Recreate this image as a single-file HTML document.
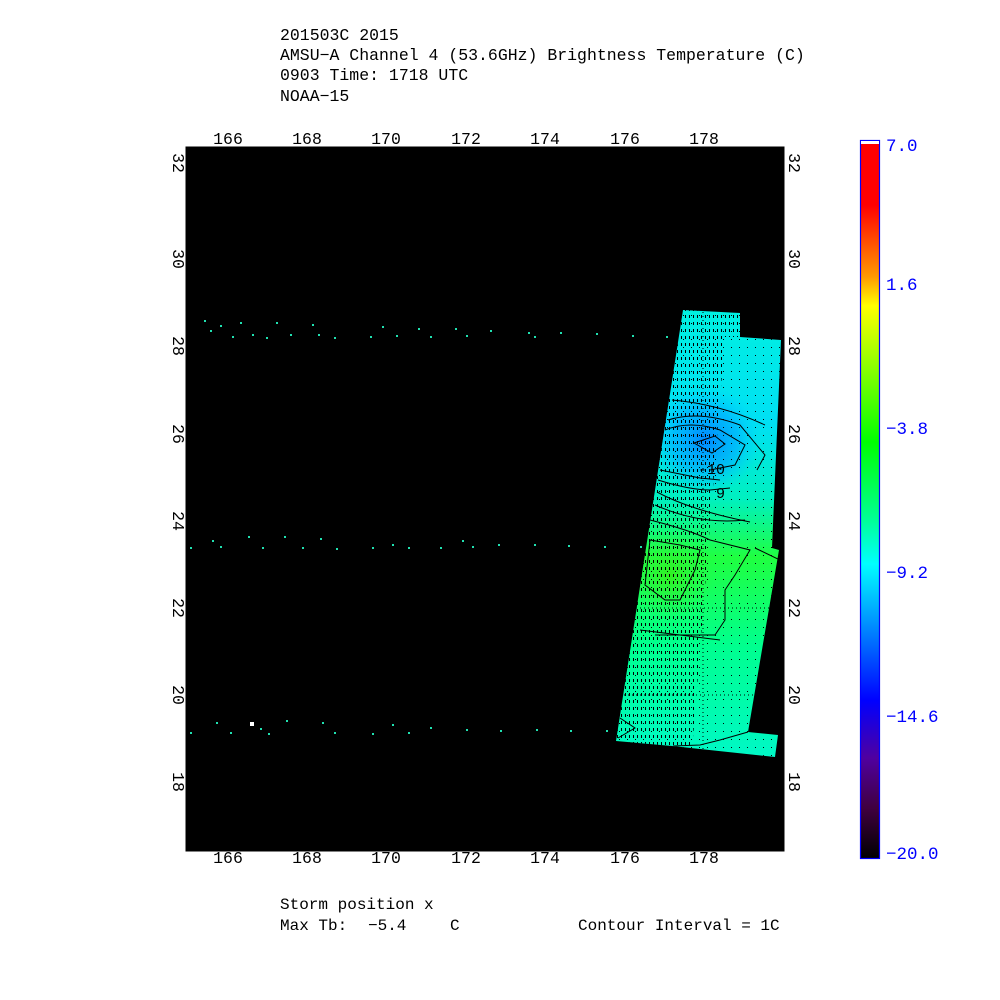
<!DOCTYPE html>
<html><head><meta charset="utf-8"><style>
html,body{margin:0;padding:0;background:#fff;width:1000px;height:1000px;overflow:hidden}
svg{display:block}
text{font-family:"Liberation Mono",monospace}
</style></head><body>
<svg width="1000" height="1000" viewBox="0 0 1000 1000" xmlns="http://www.w3.org/2000/svg">
<defs>
<linearGradient id="cb" x1="0" y1="0" x2="0" y2="1">
<stop offset="0" stop-color="#ff0000"/>
<stop offset="0.09" stop-color="#ff0000"/>
<stop offset="0.19" stop-color="#ff9a00"/>
<stop offset="0.23" stop-color="#ffff00"/>
<stop offset="0.42" stop-color="#00ff00"/>
<stop offset="0.53" stop-color="#00ff99"/>
<stop offset="0.59" stop-color="#00ffff"/>
<stop offset="0.78" stop-color="#0000ff"/>
<stop offset="0.86" stop-color="#5000a0"/>
<stop offset="0.93" stop-color="#400040"/>
<stop offset="1" stop-color="#000000"/>
</linearGradient>
<linearGradient id="sw" x1="0" y1="310" x2="0" y2="760" gradientUnits="userSpaceOnUse">
<stop offset="0" stop-color="#00f0e0"/>
<stop offset="0.25" stop-color="#00e0f4"/>
<stop offset="0.42" stop-color="#00f0c0"/>
<stop offset="0.55" stop-color="#20ff40"/>
<stop offset="0.75" stop-color="#00ff90"/>
<stop offset="1" stop-color="#00f8c8"/>
</linearGradient>
<radialGradient id="bl" cx="705" cy="440" r="55" gradientUnits="userSpaceOnUse">
<stop offset="0" stop-color="#0088ff"/>
<stop offset="0.6" stop-color="#00b0ff" stop-opacity="0.7"/>
<stop offset="1" stop-color="#00d0ff" stop-opacity="0"/>
</radialGradient>
<radialGradient id="gr" cx="670" cy="575" r="45" gradientUnits="userSpaceOnUse">
<stop offset="0" stop-color="#30f020"/>
<stop offset="1" stop-color="#30f040" stop-opacity="0"/>
</radialGradient>
<pattern id="hat" width="4" height="7" patternUnits="userSpaceOnUse">
<rect x="1" y="0" width="1" height="3" fill="#000"/>
</pattern>
<pattern id="dot" width="8" height="8" patternUnits="userSpaceOnUse">
<rect x="3" y="3" width="1" height="1" fill="#000"/>
</pattern>
<clipPath id="swc"><path d="M683,310 L740,313 L740,337 L781,340 L772,548 L779,550 L748,732 L778,735 L775,757 L672,746 L616,741 Z"/></clipPath>
</defs>

<g font-size="16.5" fill="#000">
<text x="280" y="40">201503C 2015</text>
<text x="280" y="60">AMSU−A Channel 4 (53.6GHz) Brightness Temperature (C)</text>
<text x="280" y="80">0903 Time: 1718 UTC</text>
<text x="280" y="101">NOAA−15</text>
</g>

<rect x="185" y="146" width="600" height="706" fill="#000"/>
<path d="M185,146 V852 H785 V146 Z" fill="none" stroke="#fff" stroke-width="1"/>

<g clip-path="url(#swc)">
<rect x="600" y="300" width="200" height="470" fill="url(#sw)"/>
<rect x="600" y="300" width="200" height="470" fill="url(#gr)"/>
<rect x="600" y="300" width="200" height="470" fill="url(#bl)"/>
<rect x="600" y="300" width="200" height="470" fill="url(#dot)"/>
<path d="M683,300 L740,300 L740,337 L725,337 L688,800 L600,800 Z" fill="url(#hat)"/>
<g fill="none" stroke="#000" stroke-width="1">
<path d="M672,400 Q720,404 765,425"/>
<path d="M668,420 Q700,410 740,425 L765,455 L757,470"/>
<path d="M665,430 Q690,420 720,430 L745,445 L735,465 L710,470"/>
<path d="M694,443 L715,436 L725,444 L712,453 Z"/>
<path d="M660,470 L700,478 L720,480"/>
<path d="M658,480 Q690,490 710,490 L730,488"/>
<path d="M657,492 Q690,510 750,522"/>
<path d="M655,505 Q700,525 745,520"/>
<path d="M650,520 Q690,530 710,540 L750,550 L735,575 L725,590 L725,620 L715,635 L655,635"/>
<path d="M650,540 L680,545 L700,550 L695,570 L680,600 L665,600 L645,585 Z"/>
<path d="M640,630 L720,640"/>
<path d="M620,718 L635,728 L618,738"/>
<path d="M673,746 L700,745 L720,740 L748,732"/>
<path d="M755,548 L780,560"/>
</g>
<g stroke="#000" stroke-dasharray="1,3" fill="none">
<path d="M703,300 V760"/>
<path d="M600,608 H785"/>
<path d="M600,695 H785"/>
</g>
</g>
<text x="698" y="474" font-size="15" fill="#000">-10</text>
<text x="716" y="498" font-size="15" fill="#000">9</text>

<g fill="#20e0b0">
<rect x="204" y="320" width="2" height="2"/><rect x="210" y="330" width="2" height="2"/><rect x="220" y="325" width="2" height="2"/><rect x="232" y="336" width="2" height="2"/><rect x="240" y="322" width="2" height="2"/><rect x="252" y="334" width="2" height="2"/><rect x="266" y="337" width="2" height="2"/><rect x="276" y="322" width="2" height="2"/><rect x="290" y="334" width="2" height="2"/><rect x="312" y="324" width="2" height="2"/><rect x="318" y="334" width="2" height="2"/><rect x="334" y="337" width="2" height="2"/><rect x="370" y="336" width="2" height="2"/><rect x="382" y="326" width="2" height="2"/><rect x="396" y="335" width="2" height="2"/><rect x="418" y="328" width="2" height="2"/><rect x="430" y="336" width="2" height="2"/><rect x="455" y="328" width="2" height="2"/><rect x="466" y="335" width="2" height="2"/><rect x="490" y="330" width="2" height="2"/><rect x="528" y="332" width="2" height="2"/><rect x="534" y="336" width="2" height="2"/><rect x="560" y="332" width="2" height="2"/><rect x="596" y="333" width="2" height="2"/><rect x="632" y="335" width="2" height="2"/><rect x="666" y="336" width="2" height="2"/>
<rect x="190" y="547" width="2" height="2"/><rect x="212" y="540" width="2" height="2"/><rect x="220" y="546" width="2" height="2"/><rect x="248" y="536" width="2" height="2"/><rect x="262" y="547" width="2" height="2"/><rect x="284" y="536" width="2" height="2"/><rect x="302" y="547" width="2" height="2"/><rect x="320" y="538" width="2" height="2"/><rect x="336" y="548" width="2" height="2"/><rect x="372" y="547" width="2" height="2"/><rect x="392" y="544" width="2" height="2"/><rect x="408" y="547" width="2" height="2"/><rect x="440" y="547" width="2" height="2"/><rect x="462" y="540" width="2" height="2"/><rect x="472" y="546" width="2" height="2"/><rect x="498" y="544" width="2" height="2"/><rect x="534" y="544" width="2" height="2"/><rect x="568" y="545" width="2" height="2"/><rect x="604" y="546" width="2" height="2"/><rect x="640" y="546" width="2" height="2"/>
<rect x="190" y="732" width="2" height="2"/><rect x="216" y="722" width="2" height="2"/><rect x="230" y="732" width="2" height="2"/><rect x="260" y="728" width="2" height="2"/><rect x="268" y="733" width="2" height="2"/><rect x="286" y="720" width="2" height="2"/><rect x="322" y="722" width="2" height="2"/><rect x="334" y="732" width="2" height="2"/><rect x="372" y="733" width="2" height="2"/><rect x="392" y="724" width="2" height="2"/><rect x="408" y="732" width="2" height="2"/><rect x="430" y="727" width="2" height="2"/><rect x="466" y="729" width="2" height="2"/><rect x="500" y="730" width="2" height="2"/><rect x="536" y="729" width="2" height="2"/><rect x="570" y="730" width="2" height="2"/><rect x="606" y="730" width="2" height="2"/>
</g>
<rect x="250" y="722" width="4" height="4" fill="#fff"/>

<g font-size="16.5" fill="#000" text-anchor="middle">
<text x="228" y="144">166</text><text x="307" y="144">168</text><text x="386" y="144">170</text><text x="466" y="144">172</text><text x="545" y="144">174</text><text x="625" y="144">176</text><text x="704" y="144">178</text>
<text x="228" y="863">166</text><text x="307" y="863">168</text><text x="386" y="863">170</text><text x="466" y="863">172</text><text x="545" y="863">174</text><text x="625" y="863">176</text><text x="704" y="863">178</text>
</g>
<g font-size="16.5" fill="#000" text-anchor="middle">
<text transform="translate(173,163) rotate(90)">32</text><text transform="translate(173,259) rotate(90)">30</text><text transform="translate(173,346) rotate(90)">28</text><text transform="translate(173,434) rotate(90)">26</text><text transform="translate(173,521) rotate(90)">24</text><text transform="translate(173,608) rotate(90)">22</text><text transform="translate(173,695) rotate(90)">20</text><text transform="translate(173,782) rotate(90)">18</text>
<text transform="translate(789,163) rotate(90)">32</text><text transform="translate(789,259) rotate(90)">30</text><text transform="translate(789,346) rotate(90)">28</text><text transform="translate(789,434) rotate(90)">26</text><text transform="translate(789,521) rotate(90)">24</text><text transform="translate(789,608) rotate(90)">22</text><text transform="translate(789,695) rotate(90)">20</text><text transform="translate(789,782) rotate(90)">18</text>
</g>

<rect x="860.5" y="140.5" width="19" height="718" fill="url(#cb)" stroke="#0000ff" stroke-width="1.2"/>
<rect x="861" y="141" width="18" height="3" fill="#fff"/>
<g font-size="17.5" fill="#0000ff">
<text x="886" y="151">7.0</text>
<text x="886" y="290">1.6</text>
<text x="886" y="434">−3.8</text>
<text x="886" y="578">−9.2</text>
<text x="886" y="722">−14.6</text>
<text x="886" y="859">−20.0</text>
</g>

<g font-size="16" fill="#000">
<text x="280" y="909">Storm position x</text>
<text x="280" y="930">Max Tb:</text>
<text x="368" y="930">−5.4</text>
<text x="450" y="930">C</text>
<text x="578" y="930">Contour Interval = 1C</text>
</g>
</svg>
</body></html>
